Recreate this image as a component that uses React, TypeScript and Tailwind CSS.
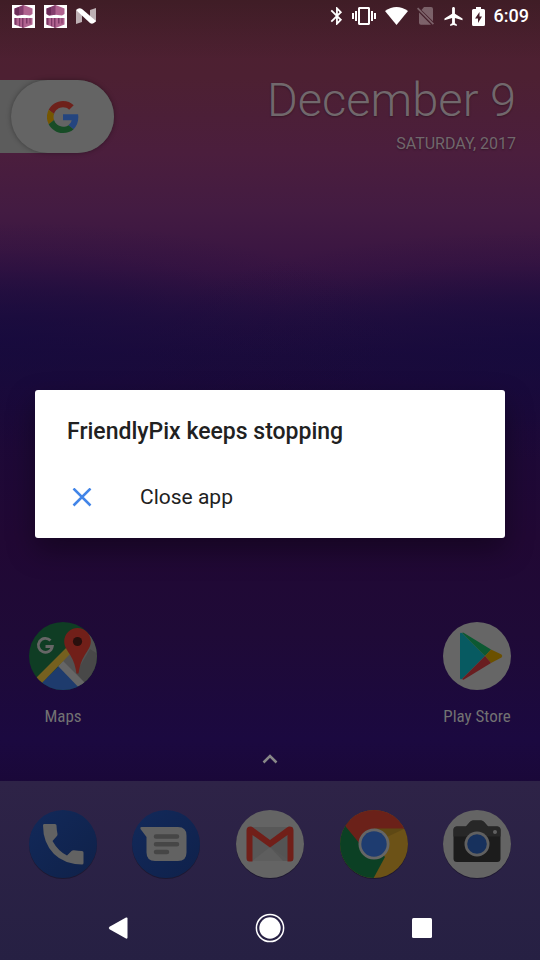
import type { ReactNode } from "react";

function Glyph({ className, box, children }: { className: string; box: string; children: ReactNode }) {
  return (
    <svg className={className} viewBox={box} fill="currentColor" aria-hidden="true">
      {children}
    </svg>
  );
}

function AppNotification() {
  return (
    <Glyph className="h-[23px] w-[23px]" box="0 0 23 23">
      <path fill="#fff" d="M0 0h23v23H0z" />
      <path fill="#b0628f" d="M11.500 0 20.500 3.500v5.500l-2.500 1.500-6.500-.8-6.500.8L2.500 9V3.500z" />
      <path fill="#6c2c59" d="M7 2v8.200l-2 .3L2.500 9V3.500z" />
      <path fill="#843e6e" d="M11.500 0v9.700L7 10.200V2z" />
      <path fill="#b0628f" d="M2.500 13h18v6.500l-9 3.500-9-3.500z" />
      <path fill="#7c3866" d="M2.500 13h2v7.200l-2-.7zM7 13h1.200v8.500L7 21zM10 13h1.500v10l-1.500-.5zM14 13h1.500v5.500H14zM17.500 13h1v5.500h-1z" />
    </Glyph>
  );
}

function StatusBar() {
  return (
    <header className="relative z-20 flex h-8 items-center justify-between pr-[11px] pl-3 text-white">
      <div className="flex items-center gap-[9px]">
        <AppNotification />
        <AppNotification />
        <Glyph className="h-4 w-5" box="0 0 20 16">
          <path fillOpacity=".65" d="M0 2 6 5v9l-6 2zM14 2l6-2v14l-6-3z" />
          <path d="M0 2Q3-1 6 1l14 12q-3 4-6 2z" />
        </Glyph>
      </div>
      <div className="flex items-center gap-[9px]">
        <Glyph className="h-[18px] w-[13px]" box="5 2 13 20">
          <path d="M17.710 7.710 12 2h-1v7.590L6.410 5 5 6.410 10.590 12 5 17.590 6.410 19 11 14.410V22h1l5.710-5.710L13.410 12zM13 5.830l1.880 1.880L13 9.590zm1.880 10.460L13 18.170v-3.760z" />
        </Glyph>
        <Glyph className="h-6 w-6" box="0 0 24 24">
          <path d="M0 15h2V9H0zm3 2h2V7H3zm19-8v6h2V9zm-3 8h2V7h-2zM16.500 3h-9C6.670 3 6 3.670 6 4.500v15c0 .83.67 1.500 1.500 1.500h9c.83 0 1.500-.67 1.500-1.500v-15c0-.83-.67-1.500-1.500-1.500zM16 19H8V5h8z" />
        </Glyph>
        <Glyph className="h-[18px] w-[23px]" box="0 0 23 18">
          <path d="M0 4Q11.500-4 23 4L11.500 18z" />
        </Glyph>
        <Glyph className="h-[18px] w-[18px] opacity-30" box="0 0 18 18">
          <path d="M7 0h7q2 0 2 2v12.300L4.500 3zM2 5.500 14 17.800H4q-2 0-2-2z" />
          <path d="M1.200.5 17 16.500l-1.200 1.200L0 1.800z" />
        </Glyph>
        <Glyph className="h-[19px] w-[19px]" box="2 2 19 20">
          <path d="M21 16v-2l-8-5V3.500c0-.83-.67-1.500-1.500-1.500S10 2.670 10 3.500V9l-8 5v2l8-2.500V19l-2 1.500V22l3.500-1 3.500 1v-1.500L13 19v-5.500z" />
        </Glyph>
        <Glyph className="h-[19px] w-[13px]" box="0 0 13 19">
          <path fillRule="evenodd" d="M4 0h5v2h2.500Q13 2 13 3.500v14Q13 19 11.500 19h-10Q0 19 0 17.500v-14Q0 2 1.500 2H4zM7.500 5 3 11.500h3V16l4-6.500H7.500z" />
        </Glyph>
        <time className="text-lg font-medium">6:09</time>
      </div>
    </header>
  );
}

function GoogleMark() {
  return (
    <svg className="h-8 w-8" viewBox="0 0 48 48" aria-hidden="true">
      <path fill="#6e211b" d="M24 9.500c3.540 0 6.710 1.220 9.210 3.600l6.850-6.850C35.900 2.380 30.470 0 24 0 14.620 0 6.510 5.380 2.560 13.220l7.980 6.190C12.430 13.720 17.740 9.500 24 9.500z" />
      <path fill="#24457f" d="M46.980 24.550c0-1.570-.15-3.090-.38-4.550H24v9.020h12.940c-.58 2.960-2.260 5.480-4.780 7.180l7.730 6c4.510-4.180 7.090-10.360 7.090-17.650z" />
      <path fill="#755600" d="M10.530 28.590a14.500 14.500 0 0 1 0-9.180l-7.980-6.190a24 24 0 0 0 0 21.560z" />
      <path fill="#174c26" d="M24 48c6.480 0 11.930-2.130 15.890-5.810l-7.730-6c-2.150 1.450-4.920 2.300-8.160 2.300-6.260 0-11.570-4.220-13.470-9.910l-7.980 6.190C6.510 42.620 14.620 48 24 48z" />
    </svg>
  );
}

function MapsIcon() {
  return (
    <svg className="h-[70px] w-[70px]" viewBox="0 0 70 70" aria-hidden="true">
      <defs>
        <clipPath id="maps-disc"><circle cx="35" cy="35" r="34" /></clipPath>
      </defs>
      <g clipPath="url(#maps-disc)">
        <path fill="#0f3d24" d="M0 0h70v70H0z" />
        <path fill="#525252" d="M31 41 70 4v66H60z" />
        <path fill="#1e3b6d" d="M31 45 5 70h55z" />
        <path fill="#666" d="m30 45 5-5 27 27-5 6z" />
        <path fill="#75601f" d="M4 61 42 23l2 8L10 66z" />
        <path fill="#000" opacity=".12" d="m48 52 14-24 8 5v18L57 62z" />
      </g>
      <path fill="#711f19" d="M49.500 7A13.300 13.300 0 0 0 36.200 20.500c0 5 2.800 8.500 6 13.500 3.800 6 5.300 12 6.300 18.500h2c1-6.500 2.500-12.500 6.300-18.500 3.200-5 6-8.500 6-13.500A13.300 13.300 0 0 0 49.500 7z" />
      <circle cx="49.500" cy="20.500" r="4.600" fill="#280f0d" />
      <path fill="none" stroke="#666" strokeWidth="2.800" d="M22.500 19.500a7 7 0 1 0 1.800 6H17.500" />
    </svg>
  );
}

function PlayIcon() {
  return (
    <svg className="h-[70px] w-[70px]" viewBox="0 0 70 70" aria-hidden="true">
      <circle cx="35" cy="35" r="34" fill="#666" />
      <path fill="#075a61" d="M18 13v44q0 2 2 1l23-23-23-23q-2-1-2 1z" />
      <path fill="#0c5932" d="M20 12q1-1 2 0l27 16.500-6 6.500z" />
      <path fill="#6b5000" d="m49 28.500 10.500 5q1.500 1.500 0 3L49 42l-6-7z" />
      <path fill="#691d20" d="m43 35 6 7-27 16.500q-1 .5-2-.5z" />
    </svg>
  );
}

function PhoneIcon() {
  return (
    <svg className="h-[70px] w-[70px]" viewBox="0 0 70 70" aria-hidden="true">
      <defs>
        <linearGradient id="phone-disc" x2="1" y2="1"><stop stopColor="#12295a" /><stop offset="1" stopColor="#0f2149" /></linearGradient>
      </defs>
      <circle cx="35" cy="36" r="34" fill="#000" opacity=".3" />
      <circle cx="35" cy="35" r="34" fill="url(#phone-disc)" />
      <path fill="#626262" d="M16 15h11q1.500 0 1.500 1.500.2 5 1 8.500.3 1.200-1 2.500L24.500 32Q30 42 39 46.500l4.500-4.500q1-1 2.500-.8 4 .8 8 .8 1.500 0 1.500 1.500v10.500q0 1.500-1.500 1.500Q36 55 26 45 15 34 15 16.500 15 15 16 15z" />
    </svg>
  );
}

function MessagesIcon() {
  return (
    <svg className="h-[70px] w-[70px]" viewBox="0 0 70 70" aria-hidden="true">
      <defs>
        <linearGradient id="messages-disc" x2="1" y2="1"><stop stopColor="#12295a" /><stop offset="1" stopColor="#0f214b" /></linearGradient>
      </defs>
      <circle cx="35" cy="36" r="34" fill="#000" opacity=".3" />
      <circle cx="35" cy="35" r="34" fill="url(#messages-disc)" />
      <path fill="#626262" d="M10.500 18H47q8.500 0 8.500 8.500v17q0 8.500-8.500 8.500H24q-8.500 0-8.500-8.500V28L9.500 20q-.8-2 1-2z" />
      <path stroke="#464646" strokeWidth="4.500" strokeLinecap="round" d="M25 27.500h21M25 35.200h21M25 43h11" />
    </svg>
  );
}

function GmailIcon() {
  return (
    <svg className="h-[70px] w-[70px]" viewBox="0 0 70 70" aria-hidden="true">
      <circle cx="35" cy="36" r="34" fill="#000" opacity=".3" />
      <circle cx="35" cy="35" r="34" fill="#646464" />
      <path fill="#585858" d="M13 18h45v34H13z" />
      <path fill="#5e5e5e" d="M17 52 35 38l20 14z" />
      <path fill="#525252" d="M35 38 58 20v32H48z" opacity=".6" />
      <path fill="#711f19" d="M11.500 21.500q0-4 4-4 1.500 0 2.500 1l17 12.500 17-12.500q1-1 2.500-1 4 0 4 4V49q0 3.500-3 3.500h-3V26L35 38.500 17.500 26v26.500h-3q-3 0-3-3.500z" />
    </svg>
  );
}

function ChromeIcon() {
  return (
    <svg className="h-[70px] w-[70px]" viewBox="0 0 70 70" aria-hidden="true">
      <defs>
        <clipPath id="chrome-disc"><circle cx="35" cy="35" r="34" /></clipPath>
      </defs>
      <circle cx="35" cy="36" r="34" fill="#000" opacity=".3" />
      <g clipPath="url(#chrome-disc)">
        <path fill="#6c5217" d="M0 0h70v70H0z" />
        <path fill="#0b4024" d="M0 0 35 35l11 13L33 72H0z" />
        <path fill="#6b2119" d="M7 18-3-3h76v22.500H35V35H21z" />
        <path fill="#000" opacity=".12" d="M35 19.500h31L48 28z" />
      </g>
      <circle cx="35" cy="35" r="15.500" fill="#666" />
      <circle cx="35" cy="35" r="12.700" fill="#1e3c70" />
    </svg>
  );
}

function CameraIcon() {
  return (
    <svg className="h-[70px] w-[70px]" viewBox="0 0 70 70" aria-hidden="true">
      <circle cx="35" cy="36" r="34" fill="#000" opacity=".3" />
      <circle cx="35" cy="35" r="34" fill="#646464" />
      <path fill="#1c1c1c" d="M15 17.500h9l3.500-4Q29 11.500 31 11.500h8q2 0 3.500 2l3.500 4h9q3.500 0 3.500 3.500v28.500q0 3.500-3.500 3.500H15q-3.500 0-3.500-3.500V21q0-3.500 3.500-3.500z" />
      <path fill="#272727" d="M15 17.500h9l3.500-4Q29 11.500 31 11.500h8q2 0 3.500 2l3.500 4h9q3.500 0 3.500 3.500v6.500h-47V21q0-3.500 3.500-3.500z" />
      <circle cx="53" cy="23" r="2" fill="#606060" />
      <circle cx="35" cy="35" r="12.500" fill="#606060" />
      <circle cx="35" cy="35" r="9.800" fill="#17315d" />
    </svg>
  );
}

function Shortcut({ label, children }: { label: string; children: ReactNode }) {
  return (
    <button type="button" className="flex w-[104px] flex-col items-center gap-[15px] font-['Roboto_Condensed',Roboto,sans-serif] text-[17px] leading-5 text-[#727272]">
      {children}
      <span>{label}</span>
    </button>
  );
}

function DockApp({ label, children }: { label: string; children: ReactNode }) {
  return (
    <button type="button" aria-label={label} className="flex w-[104px] justify-center">
      {children}
    </button>
  );
}

function CrashDialog() {
  return (
    <div className="absolute inset-0 z-10 flex items-center px-[35px] pb-8">
      <section
        role="alertdialog"
        aria-labelledby="crash-title"
        className="w-full rounded-[3px] bg-white px-8 pt-[26px] pb-4 text-[#212121] shadow-[0_12px_28px_rgba(0,0,0,0.35)]"
      >
        <h1 id="crash-title" className="text-[23px] leading-8 font-medium">
          FriendlyPix keeps stopping
        </h1>
        <button type="button" className="mt-[26px] flex h-12 w-full items-center text-left text-[21px]">
          <svg className="ml-[5px] h-5 w-5" viewBox="0 1 20 20" fill="none" stroke="#4285e8" strokeWidth="2.500" aria-hidden="true">
            <path d="m1.500 1.500 17 17M18.500 1.500l-17 17" />
          </svg>
          <span className="ml-12">Close app</span>
        </button>
      </section>
    </div>
  );
}

export default function App() {
  return (
    <div className="relative flex min-h-screen flex-col overflow-hidden bg-[linear-gradient(180deg,rgba(20,20,8,0.25),transparent_60px),radial-gradient(75%_12%_at_0%_35%,rgba(20,10,62,0.7),rgba(20,10,62,0.45)_40%,rgba(20,10,62,0.12)_75%,transparent),radial-gradient(75%_12%_at_100%_36%,rgba(20,10,62,0.7),rgba(20,10,62,0.45)_40%,rgba(20,10,62,0.12)_75%,transparent),linear-gradient(180deg,#4e2030_0%,#4d2032_8%,#4b1e3d_16%,#431b42_22%,#381442_28%,#260f3e_33%,#1d0b3a_37%,#1c0938_43%,#210834_56%,#1f0a37_66%,#1b0940_77%,#1a0838_82%)] font-[Roboto,sans-serif]">
      <StatusBar />

      <main className="flex flex-1 flex-col pt-12">
        <div className="flex items-start justify-between">
          <button type="button" aria-label="Google search" className="flex rounded-r-full bg-[#5c5c5c]">
            <span className="ml-[11px] flex h-[73px] w-[103px] items-center justify-center rounded-full bg-[#646464] shadow-[0_0_5px_rgba(0,0,0,0.35)]">
              <GoogleMark />
            </span>
          </button>
          <div className="pr-6 text-right text-[#71686c] [text-shadow:0_1px_2px_rgba(0,0,0,0.3)]">
            <p className="text-[47px] leading-10 font-light">December 9</p>
            <p className="mt-3 text-base leading-6">SATURDAY, 2017</p>
          </div>
        </div>

        <div className="mt-auto flex justify-between px-[11px]">
          <Shortcut label="Maps"><MapsIcon /></Shortcut>
          <Shortcut label="Play Store"><PlayIcon /></Shortcut>
        </div>
        <button type="button" aria-label="All apps" className="mt-5 flex h-[35px] justify-center pt-[5px] text-[#888]">
          <svg className="h-4 w-4" viewBox="0 0 16 16" fill="none" stroke="currentColor" strokeWidth="2.500" aria-hidden="true">
            <path d="M1.500 11.500 8 5l6.500 6.500" />
          </svg>
        </button>
      </main>

      <footer className="bg-linear-to-b from-[#2e2347] to-[#262043]">
        <div className="flex justify-between px-[11px] pt-7">
          <DockApp label="Phone"><PhoneIcon /></DockApp>
          <DockApp label="Messages"><MessagesIcon /></DockApp>
          <DockApp label="Gmail"><GmailIcon /></DockApp>
          <DockApp label="Chrome"><ChromeIcon /></DockApp>
          <DockApp label="Camera"><CameraIcon /></DockApp>
        </div>
        <nav className="relative z-20 mt-[17px] flex h-16 items-center justify-center gap-[120px] text-white">
          <button type="button" aria-label="Back">
            <Glyph className="h-8 w-8" box="0 0 32 32">
              <path d="M24 5.500q1.500-.5 1.500 1v19q0 1.500-1.500 1L7.500 17.200q-1.500-1.200 0-2.400z" />
            </Glyph>
          </button>
          <button type="button" aria-label="Home">
            <Glyph className="h-8 w-8" box="0 0 32 32">
              <circle cx="16" cy="16" r="10.700" />
              <circle cx="16" cy="16" r="13.600" fill="none" stroke="currentColor" strokeWidth="1.500" />
            </Glyph>
          </button>
          <button type="button" aria-label="Overview">
            <Glyph className="h-8 w-8" box="0 0 32 32">
              <rect x="6" y="6" width="20" height="20" rx="1.500" />
            </Glyph>
          </button>
        </nav>
      </footer>

      <CrashDialog />
    </div>
  );
}
